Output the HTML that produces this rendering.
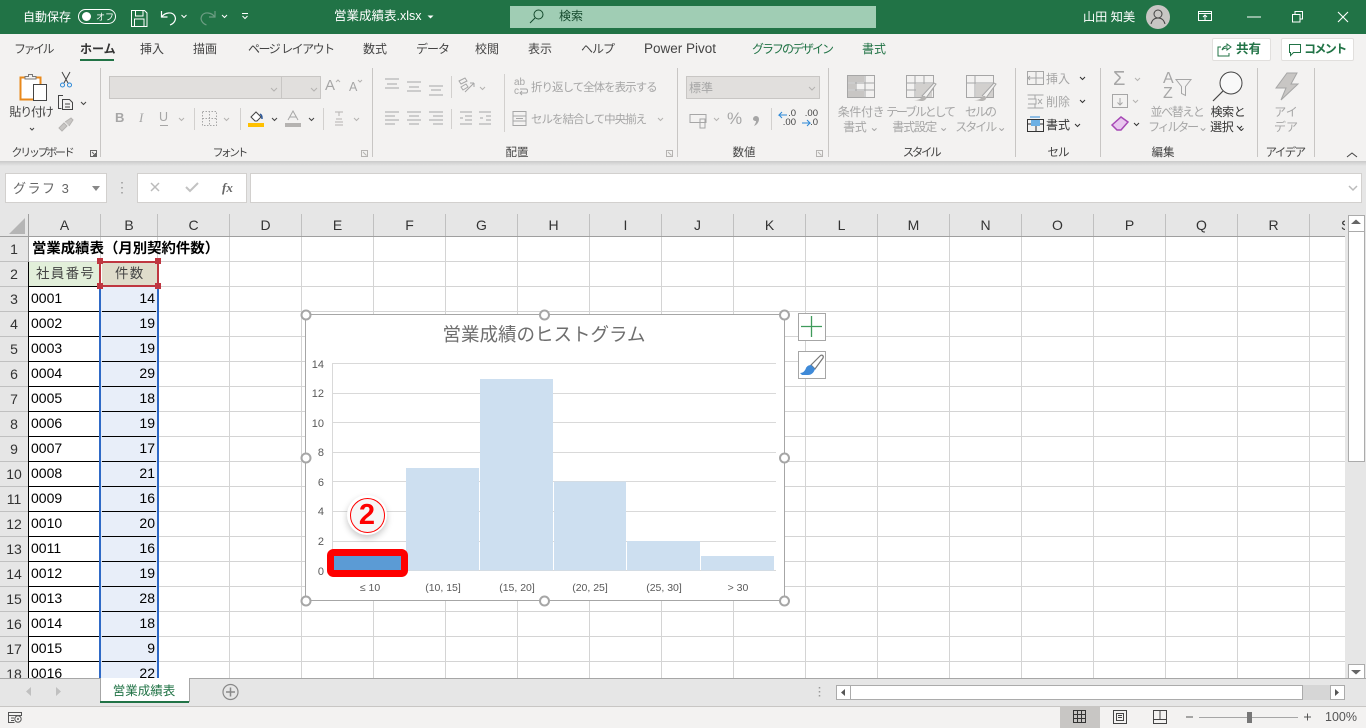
<!DOCTYPE html>
<html lang="ja"><head><meta charset="utf-8"><title>営業成績表</title>
<style>
html,body{margin:0;padding:0}
body{width:1366px;height:728px;overflow:hidden;position:relative;background:#fff;font-family:"Liberation Sans","Noto Sans CJK JP",sans-serif;font-size:12px;color:#444}
.a{position:absolute;white-space:nowrap}
.c{position:absolute;white-space:nowrap;transform:translateX(-50%);text-align:center}
svg{position:absolute;left:0;top:0;overflow:visible}
.g{color:#a6a6a6}
.tab{position:absolute;top:41px;line-height:16px;font-size:12px;color:#444;white-space:nowrap}
.lab{position:absolute;top:145px;line-height:16px;font-size:11.5px;color:#444;white-space:nowrap;transform:translateX(-50%)}
.col{position:absolute;line-height:25px;font-size:14px;color:#000;white-space:nowrap}
.hd{position:absolute;top:214px;height:23px;line-height:23px;text-align:center;font-size:14px;color:#333}
.ax{position:absolute;left:300px;width:24px;text-align:right;font-size:11px;line-height:14px;color:#595959}
.cat{position:absolute;top:581px;font-size:10.5px;line-height:14px;color:#595959;white-space:nowrap;transform:translateX(-50%)}
</style></head><body>

<!-- title bar -->
<div class="a" style="left:0;top:0;width:1366px;height:34px;background:#217346"></div>
<div class="a" style="left:23px;top:9px;line-height:16px;color:#fff;font-size:12px">自動保存</div>
<div class="a" style="left:78px;top:9px;width:36px;height:13px;border:1px solid #fff;border-radius:8px"></div>
<div class="a" style="left:82px;top:12px;width:9px;height:9px;border-radius:50%;background:#fff"></div>
<div class="a" style="left:96px;top:10px;line-height:14px;color:#fff;font-size:9px">オフ</div>
<div class="a" style="left:334px;top:8px;line-height:17px;color:#fff;font-size:12.5px">営業成績表.xlsx</div>
<div class="a" style="left:510px;top:6px;width:366px;height:22px;background:#a0cdb4"></div>
<div class="a" style="left:559px;top:8px;line-height:17px;color:#14492c;font-size:12px">検索</div>
<div class="a" style="left:1083px;top:9px;line-height:17px;color:#fff;font-size:12.2px">山田 知美</div>
<svg width="1366" height="34" fill="none" stroke="#fff" stroke-width="1">
<path d="M131.5 10.5h13l2.500 2.500v13.500h-15.500zM135.500 10.500v5.500h7.500v-5.500M134.500 26.500v-7.500h9.500v7.500"/>
<path d="M161.500 11v6h6M162 16.500c3-4 10-5 12.500-1 2.500 4-.5 8-4.500 9.500" stroke-width="1.200"/>
<path d="M181.500 15l2.500 2.500 2.500-2.500M222 15l2.500 2.500 2.500-2.500" />
<path d="M215 11v6h-6M214.500 16.500c-3-4-10-5-12.500-1-2.500 4 .5 8 4.500 9.500" stroke="#6c9d83" stroke-width="1.200"/>
<path d="M242 13.500h6M242.500 16l2.500 2.500 2.500-2.500"/>
<path d="M427.500 15.500h6l-3 3z" fill="#fff" stroke="none"/>
<circle cx="538.500" cy="14.500" r="4.500" stroke="#14492c"/><path d="M535 18l-5 5" stroke="#14492c"/>
<circle cx="1158" cy="17" r="12" fill="#c8c6c4" stroke="none"/>
<circle cx="1158" cy="14" r="4" stroke="#444"/><path d="M1151 24c1-4 3-6 7-6s6 2 7 6" stroke="#444"/>
<path d="M1198.500 11.500h13v9h-13zM1198.500 13.500h13M1205 20v-5M1203 17l2-2 2 2"/>
<path d="M1247 17h14"/>
<path d="M1292.500 14.500h7.500v7.500h-7.500zM1295 14v-2.500h7.500v7.500h-2.500"/>
<path d="M1338 12l10 10M1348 12l-10 10" stroke-width="1.100"/>
</svg>

<!-- ribbon -->
<div class="a" style="left:0;top:34px;width:1366px;height:127px;background:#f3f2f1"></div>
<div class="a" style="left:0;top:161px;width:1366px;height:53px;background:#e6e6e6"></div>
<div class="a" style="left:0;top:161px;width:1366px;height:5px;background:linear-gradient(#c9c9c9,#e6e6e6)"></div>
<div class="tab" style="left:14px;letter-spacing:-2.5px">ファイル</div>
<div class="tab" style="left:80px;font-weight:bold;color:#333">ホーム</div>
<div class="a" style="left:80px;top:59px;width:34px;height:2px;background:#217346"></div>
<div class="tab" style="left:140px">挿入</div>
<div class="tab" style="left:193px">描画</div>
<div class="tab" style="left:248px;letter-spacing:-1.5px">ページ レイアウト</div>
<div class="tab" style="left:363px">数式</div>
<div class="tab" style="left:416px;letter-spacing:-1px">データ</div>
<div class="tab" style="left:475px">校閲</div>
<div class="tab" style="left:528px">表示</div>
<div class="tab" style="left:581px;letter-spacing:-1px">ヘルプ</div>
<div class="tab" style="left:644px;font-size:13.5px">Power Pivot</div>
<div class="tab" style="left:752px;color:#217346;letter-spacing:-2px">グラフのデザイン</div>
<div class="tab" style="left:862px;color:#217346">書式</div>
<div class="a" style="left:1212px;top:38px;width:57px;height:21px;background:#fff;border:1px solid #e1dfdd;border-radius:2px"></div>
<div class="a" style="left:1236px;top:41px;line-height:16px;font-weight:bold;color:#217346;font-size:12.500px">共有</div>
<div class="a" style="left:1281px;top:38px;width:71px;height:21px;background:#fff;border:1px solid #e1dfdd;border-radius:2px"></div>
<div class="a" style="left:1304px;top:41px;line-height:16px;font-weight:bold;color:#217346;font-size:12px;letter-spacing:-1.6px">コメント</div>

<!-- combos -->
<div class="a" style="left:109px;top:76px;width:171px;height:21px;background:#e1dfdd;border:1px solid #c8c6c4"></div>
<div class="a" style="left:281px;top:76px;width:38px;height:21px;background:#e1dfdd;border:1px solid #c8c6c4"></div>
<div class="a" style="left:686px;top:76px;width:132px;height:21px;background:#e1dfdd;border:1px solid #c8c6c4"></div>
<div class="a g" style="left:689px;top:80px;line-height:16px;font-size:12px">標準</div>

<div class="c" style="left:31px;top:104px;line-height:16px;color:#444;letter-spacing:-1.2px">貼り付け</div>
<div class="lab" style="left:42px;font-size:11px;letter-spacing:-2.3px">クリップボード</div>
<div class="lab" style="left:229px;font-size:11px;letter-spacing:-2.8px">フォント</div>
<div class="lab" style="left:517px">配置</div>
<div class="lab" style="left:744px">数値</div>
<div class="lab" style="left:921px;letter-spacing:-2.4px">スタイル</div>
<div class="lab" style="left:1058px;letter-spacing:-1px">セル</div>
<div class="lab" style="left:1163px">編集</div>
<div class="lab" style="left:1285px;letter-spacing:-1.6px">アイデア</div>

<div class="a g" style="left:531px;top:80px;line-height:16px;font-size:11.5px;letter-spacing:-1px">折り返して全体を表示する</div>
<div class="a g" style="left:531px;top:112px;line-height:16px;font-size:11.5px;letter-spacing:-1px">セルを結合して中央揃え</div>

<div class="c g" style="left:861px;top:105px;line-height:15px;letter-spacing:-.4px">条件付き<br>書式 ⌄</div>
<div class="c g" style="left:920px;top:105px;line-height:15px;letter-spacing:-2.2px">テーブルとして<br><span style="letter-spacing:-1px">書式設定 ⌄</span></div>
<div class="c g" style="left:980px;top:105px;line-height:15px;letter-spacing:-2px">セルの<br>スタイル ⌄</div>
<div class="a g" style="left:1046px;top:71px;line-height:16px">挿入</div>
<div class="a g" style="left:1046px;top:94px;line-height:16px">削除</div>
<div class="a" style="left:1046px;top:117px;line-height:16px;color:#333">書式</div>
<div class="c g" style="left:1177px;top:105px;line-height:15px;letter-spacing:-1.4px">並べ替えと<br><span style="letter-spacing:-2.2px">フィルター ⌄</span></div>
<div class="c" style="left:1228px;top:105px;line-height:15px;color:#333;letter-spacing:-.4px">検索と<br>選択 ⌄</div>
<div class="c g" style="left:1286px;top:105px;line-height:15px">アイ<br>デア</div>
<div class="a" style="left:325px;top:76px;font-size:15px;line-height:20px;color:#a6a6a6">A</div>
<div class="a" style="left:349px;top:78px;font-size:12.500px;line-height:18px;color:#a6a6a6">A</div>
<div class="a" style="left:115px;top:110px;font-size:13px;line-height:16px;font-weight:bold;color:#a6a6a6">B</div>
<div class="a" style="left:139px;top:110px;font-size:13px;line-height:16px;font-style:italic;color:#a6a6a6;font-family:'Liberation Serif',serif">I</div>
<div class="a" style="left:159px;top:109px;font-size:12.500px;line-height:16px;color:#a6a6a6">U</div>
<div class="a" style="left:727px;top:108px;font-size:17px;line-height:22px;color:#a6a6a6">%</div>
<div class="a" style="left:779px;width:17px;text-align:right;top:110px;font-size:9.5px;line-height:8.5px;color:#444">.0<br>.00</div>
<div class="a" style="left:801px;width:17px;text-align:right;top:110px;font-size:9.5px;line-height:8.5px;color:#444">.00<br>.0</div>
<div class="a" style="left:514px;top:78px;font-size:10px;line-height:9px;color:#a6a6a6">ab<br>c</div>
<div class="a" style="left:1163px;top:71px;font-size:16px;line-height:15px;color:#a6a6a6">A<br>Z</div>
<div class="a" style="left:1113px;top:67px;font-size:20px;line-height:24px;color:#a6a6a6">Σ</div>

<svg width="1366" height="170" fill="none" stroke="#a6a6a6">
<!-- dividers -->
<path d="M100.500 68v89M372.500 68v89M677.500 68v89M828.500 68v89M1015.500 68v89M1100.500 68v89M1257.500 68v89M1314.500 68v89" stroke="#c8c6c4"/>
<path d="M194.500 108v22M240.500 108v22M323.500 108v22M451.500 76v22M451.500 109v20M504.500 74v58M771.500 108v22" stroke="#d2d0ce"/>
<!-- paste -->
<rect x="20.500" y="77.500" width="20" height="22" fill="#fff" stroke="#e8891c" stroke-width="2"/>
<path d="M25 79v-2.500h3.500v-2h4v2h3.500V79z" fill="#f3f2f1" stroke="#777"/>
<rect x="33.500" y="84.500" width="13" height="16" fill="#fff" stroke="#444"/>
<path d="M30 128l2 2 2-2" stroke="#444"/>
<!-- scissors -->
<path d="M62 72l6 11M70 72l-6 11" stroke="#444"/>
<circle cx="62.500" cy="85" r="2" stroke="#2b88d8"/><circle cx="69.500" cy="85" r="2" stroke="#2b88d8"/>
<!-- copy -->
<path d="M63 95.500h-4.500v13h3M62.500 99.500h7l3 3v7h-10zM65 104h5M65 107h5" stroke="#444"/>
<path d="M81 102l2.500 2.500L86 102" stroke="#444"/>
<path d="M59 128l5-5 3 3-5 5zM65 122l6-4 2 2-4 6" fill="#c8c6c4" stroke="#b5b3b1"/>
<!-- launchers -->
<path d="M90.500 150.500h6v6h-6zM92 152l3.500 3.500M95.500 153v2.500H93" stroke="#666"/>
<path d="M361.500 150.500h6v6h-6zM363 152l3.500 3.500" stroke="#b5b3b1"/>
<path d="M666.500 150.500h6v6h-6zM668 152l3.500 3.500M816.500 150.500h6v6h-6zM818 152l3.500 3.500" stroke="#b5b3b1"/>
<!-- combo chevrons -->
<path d="M271 88l3 3 3-3M311 88l3 3 3-3M809 87l3 3 3-3" stroke="#b5b3b1"/>
<!-- A up/down -->
<path d="M336 82l2-2 2 2M358 80l2 2 2-2" stroke="#b5b3b1"/>
<!-- underline etc. -->
<path d="M160 125.500h8" stroke="#a6a6a6"/>
<path d="M179 118l2.500 2.500 2.500-2.500M224 118l2.500 2.500 2.500-2.500M354 118l2.500 2.500 2.500-2.500" stroke="#b5b3b1"/>
<path d="M272 118l2.500 2.500 2.500-2.500M309 118l2.500 2.500 2.500-2.500" stroke="#444"/>
<!-- borders -->
<path d="M202.500 111.500h14v14h-14z" stroke="#a6a6a6" stroke-dasharray="1.500 1.500"/>
<path d="M202.500 118.500h14M209.500 111v15" stroke="#a6a6a6" stroke-dasharray="1.500 1.500"/>
<!-- fill color -->
<path d="M251 117l5-5 5 5-4 4h-2z" fill="#fff" stroke="#444"/><path d="M260 114c2 1 2 3 2 5" stroke="#2b579a" stroke-width="1.500"/>
<rect x="248" y="123" width="16" height="4" fill="#ffc000" stroke="none"/>
<rect x="285" y="123" width="16" height="4" fill="#b5b3b1" stroke="none"/>
<path d="M288 120l5-9 5 9M290 117h6" stroke="#a6a6a6"/>
<!-- phonetic -->
<path d="M335 112h8M339 112v4M336 119h6M335 122h8M335 125h8" stroke="#b5b3b1"/>
<!-- align -->
<path d="M385 79h14M387 84h10M385 88h14M407 82h14M409 87h10M407 91h14M429 86h14M431 90h10M429 95h14" stroke="#a6a6a6"/>
<path d="M385 112h14M385 116h10M385 120h14M385 124h10M407 112h14M409 116h10M407 120h14M409 124h10M429 112h14M433 116h10M429 120h14M433 124h10" stroke="#a6a6a6"/>
<path d="M460 112h12M465 116h7M465 120h7M460 124h12M460 118h3M479 112h12M486 116h5M486 120h5M479 124h12M480 118h3" stroke="#a6a6a6"/>
<!-- orientation -->
<path d="M465 92l9-9M474 83h-4M474 83v4" stroke="#a6a6a6"/>
<path d="M459 81l6-3 2 3-6 3zM461 87l5-3 2 3-5 3z" stroke="#a6a6a6"/>
<path d="M480 87l2.500 2.500 2.500-2.500" stroke="#b5b3b1"/>
<path d="M658 118l2.500 2.500 2.500-2.500" stroke="#b5b3b1"/>
<!-- wrap / merge icons -->
<path d="M520 89h6c2 0 2 4 0 4h-5M522 91l-2 2 2 2" stroke="#a6a6a6"/>
<path d="M513 111.500h13v14h-13zM513 116h13M513 121h13M516 118.500h7" stroke="#a6a6a6"/>
<!-- number -->
<path d="M690 114.500h16v8h-16zM700 119h5v9h-5z" stroke="#a6a6a6"/>
<path d="M714 118l2.500 2.500 2.500-2.500" stroke="#b5b3b1"/>
<path d="M753 119a3 3 0 1 1 6 0c0 3-2 6-5 7 1-2 2-3 2-5-2 0-3-1-3-2z" fill="#a6a6a6" stroke="none"/>
<path d="M787 115h-8l3-3M779 115l3 3" stroke="#2b88d8"/>
<path d="M802 123h8l-3-3M810 123l-3 3" stroke="#2b88d8"/>
<!-- style icons -->
<path d="M847.500 75.500h27v22h-27zM847.500 83h27M847.500 90h27M856 75.500v22M865 75.500v22" stroke="#a6a6a6"/>
<rect x="848" y="76" width="16" height="6" fill="#c8c6c4" stroke="none"/><rect x="848" y="84" width="8" height="5" fill="#c8c6c4" stroke="none"/><rect x="848" y="91" width="16" height="6" fill="#c8c6c4" stroke="none"/>
<path d="M906.500 75.500h27v22h-27zM906.500 83h27M906.500 90h27M915 75.500v22M924 75.500v22" stroke="#a6a6a6"/>
<rect x="916" y="84" width="16" height="13" fill="#d2d0ce" stroke="none"/>
<path d="M966.500 75.500h27v22h-27zM966.500 83h27M975 75.500v22" stroke="#a6a6a6"/>
<rect x="976" y="84" width="17" height="13" fill="#d2d0ce" stroke="none"/>
<path d="M922 96l12-13 2 1-10 14zM982 96l12-13 2 1-10 14" fill="#f3f2f1" stroke="#a6a6a6"/>
<path d="M914 100c3 0 6 0 8-3 2-2 4-1 4 1 0 2-2 3-5 3zM974 100c3 0 6 0 8-3 2-2 4-1 4 1 0 2-2 3-5 3z" fill="#b5b3b1" stroke="none"/>
<!-- cells -->
<path d="M1027.500 71.500h16v13h-16zM1036 71.500v13M1027.500 78h16M1031 78h-3l2-2M1028 78l2 2" stroke="#a6a6a6"/>
<path d="M1027.500 95h16M1027.500 108h16M1035 95v4M1035 104v4M1028 99h8v5h-8M1038 99l4 5M1042 99l-4 5" stroke="#a6a6a6"/>
<path d="M1027.500 119.500h16v12h-16zM1027.500 124h16M1036 119.500v12" stroke="#333"/>
<rect x="1031" y="120" width="9" height="6" fill="#6cb0e4" stroke="none"/>
<path d="M1030 117h10" stroke="#2b88d8"/>
<path d="M1080 77l2.500 2.500L1085 77M1080 100l2.500 2.500 2.500-2.500M1075 124l2.500 2.500 2.500-2.500" stroke="#333"/>
<!-- editing -->
<path d="M1135 78l2.500 2.500 2.500-2.500M1133 100l2.500 2.500 2.500-2.500" stroke="#b5b3b1"/>
<path d="M1112.500 94.500h15v13h-15zM1120 98v7M1117.500 102.500l2.500 2.500 2.500-2.500" stroke="#a6a6a6"/>
<path d="M1112 125l9-8 7 5-7 8h-4z" fill="#e9c7ef" stroke="#a648b5" stroke-width="1.500"/>
<path d="M1134 123l2.500 2.500 2.500-2.500M1237 126l2.500 2.500 2.500-2.500" stroke="#333"/>
<path d="M1176 79.500h15l-5.500 7v9l-4-2v-7z" stroke="#a6a6a6"/>
<circle cx="1231" cy="83" r="11" fill="#f9f9f9" stroke="#444"/><path d="M1223 91l-10 10" stroke="#444" stroke-width="1.200"/>
<path d="M1287 73h10l-6 11h7l-17 16 5-12h-10z" fill="#c8c6c4" stroke="#a6a6a6"/>
<path d="M1347 157l5-4 5 4" stroke="#444"/>
<!-- share -->
<path d="M1221 47h-3v9h11v-3M1222 50c1-3 3-4 5-4v-2l4 3-4 3v-2c-2 0-4 1-5 2z" stroke="#217346"/>
<path d="M1289.500 44.500h11v8h-7l-3 3v-3h-1z" stroke="#217346"/>
</svg>

<!-- formula bar -->
<div class="a" style="left:5px;top:173px;width:100px;height:28px;background:#fff;border:1px solid #d2d0ce"></div>
<div class="a" style="left:13px;top:180px;line-height:18px;font-size:13px;color:#666;letter-spacing:1.500px">グラフ 3</div>
<div class="a" style="left:137px;top:173px;width:108px;height:28px;background:#fff;border:1px solid #d2d0ce"></div>
<div class="a" style="left:250px;top:173px;width:1110px;height:28px;background:#fff;border:1px solid #d2d0ce"></div>
<div class="a" style="left:222px;top:180px;line-height:16px;font-size:13px;font-weight:bold;font-style:italic;color:#666;font-family:'Liberation Serif',serif">fx</div>
<svg width="1366" height="214" fill="none">
<path d="M92 186h8l-4 5z" fill="#888"/>
<path d="M122 182v1.500M122 187v1.500M122 192v1.500" stroke="#999" stroke-width="1.500"/>
<path d="M151 183l8 8M159 183l-8 8" stroke="#bbb" stroke-width="1.500"/>
<path d="M186 187l4 4 8-8" stroke="#c2c2c2" stroke-width="2"/>
<path d="M1349 186l4 4 4-4" stroke="#bbb" stroke-width="1.500"/>
</svg>

<!-- sheet -->
<div class="a" style="left:0;top:214px;width:1345px;height:23px;background:#e6e6e6"></div>
<div class="a" style="left:0;top:237px;width:28px;height:441px;background:#e6e6e6"></div>
<div class="a" style="left:101px;top:287px;width:56px;height:391px;background:#e8eef9"></div>
<div class="a" style="left:29px;top:262px;width:71px;height:24px;background:#e2efda"></div>
<div class="a" style="left:102px;top:262px;width:55px;height:24px;background:#dfdccb"></div>

<svg width="1366" height="728" fill="none">
<path stroke="#d4d4d4" d="M29 261.500H1345M29 286.500H1345M29 311.500H1345M29 336.500H1345M29 361.500H1345M29 386.500H1345M29 411.500H1345M29 436.500H1345M29 461.500H1345M29 486.500H1345M29 511.500H1345M29 536.500H1345M29 561.500H1345M29 586.500H1345M29 611.500H1345M29 636.500H1345M29 661.500H1345"/>
<path stroke="#d4d4d4" d="M229.500 237V678M301.500 237V678M373.500 237V678M445.500 237V678M517.500 237V678M589.500 237V678M661.500 237V678M733.500 237V678M805.500 237V678M877.500 237V678M949.500 237V678M1021.500 237V678M1093.500 237V678M1165.500 237V678M1237.500 237V678M1309.500 237V678M157.500 237V262M100.500 237V262"/>
<path stroke="#c0c0c0" d="M100.500 214V236M157.500 214V236M229.500 214V236M301.500 214V236M373.500 214V236M445.500 214V236M517.500 214V236M589.500 214V236M661.500 214V236M733.500 214V236M805.500 214V236M877.500 214V236M949.500 214V236M1021.500 214V236M1093.500 214V236M1165.500 214V236M1237.500 214V236M1309.500 214V236"/>
<path stroke="#c0c0c0" d="M0 261.500H28M0 286.500H28M0 311.500H28M0 336.500H28M0 361.500H28M0 386.500H28M0 411.500H28M0 436.500H28M0 461.500H28M0 486.500H28M0 511.500H28M0 536.500H28M0 561.500H28M0 586.500H28M0 611.500H28M0 636.500H28M0 661.500H28"/>
<path stroke="#000" d="M29 286.500H100M29 311.500H100M29 336.500H100M29 361.500H100M29 386.500H100M29 411.500H100M29 436.500H100M29 461.500H100M29 486.500H100M29 511.500H100M29 536.500H100M29 561.500H100M29 586.500H100M29 611.500H100M29 636.500H100M29 661.500H100M102 311.500H156M102 336.500H156M102 361.500H156M102 386.500H156M102 411.500H156M102 436.500H156M102 461.500H156M102 486.500H156M102 511.500H156M102 536.500H156M102 561.500H156M102 586.500H156M102 611.500H156M102 636.500H156M102 661.500H156M28.500 262V678"/>
<path stroke="#9f9f9f" d="M0 236.500H1345M28.500 214V262"/>
<path fill="#b5b5b5" d="M25 218v16H9z"/>
<path stroke="#2e69c6" stroke-width="2" d="M100 287V678M158 287V678"/>
<rect x="100" y="262" width="58" height="24" stroke="#bf3640" stroke-width="2"/>
<path fill="#bf3640" d="M97 258h6v6h-6zM155 258h6v6h-6zM97 283h6v6h-6zM155 283h6v6h-6z"/>
</svg>

<div class="hd" style="left:29px;width:71px">A</div><div class="hd" style="left:101px;width:56px">B</div><div class="hd" style="left:158px;width:71px">C</div><div class="hd" style="left:230px;width:71px">D</div><div class="hd" style="left:302px;width:71px">E</div><div class="hd" style="left:374px;width:71px">F</div><div class="hd" style="left:446px;width:71px">G</div><div class="hd" style="left:518px;width:71px">H</div><div class="hd" style="left:590px;width:71px">I</div><div class="hd" style="left:662px;width:71px">J</div><div class="hd" style="left:734px;width:71px">K</div><div class="hd" style="left:806px;width:71px">L</div><div class="hd" style="left:878px;width:71px">M</div><div class="hd" style="left:950px;width:71px">N</div><div class="hd" style="left:1022px;width:71px">O</div><div class="hd" style="left:1094px;width:71px">P</div><div class="hd" style="left:1166px;width:71px">Q</div><div class="hd" style="left:1238px;width:71px">R</div><div class="hd" style="left:1310px;width:35px;overflow:hidden;text-align:left;text-indent:31px">S</div>

<div class="a" style="left:0;top:237px;width:1345px;height:441px;overflow:hidden">
<div class="col" style="left:0;top:0;width:28px;text-align:center;color:#333">1<br>2<br>3<br>4<br>5<br>6<br>7<br>8<br>9<br>10<br>11<br>12<br>13<br>14<br>15<br>16<br>17<br>18</div>
<div class="col" style="left:32px;top:0;font-weight:bold;font-size:14.400px">営業成績表（月別契約件数）</div>
<div class="col" style="left:36px;top:24px;font-size:13.500px;letter-spacing:1.300px;color:#444">社員番号</div>
<div class="col" style="left:115px;top:24px;font-size:13.500px;letter-spacing:1.300px;color:#444">件数</div>
<div class="col" style="left:31px;top:49px">0001<br>0002<br>0003<br>0004<br>0005<br>0006<br>0007<br>0008<br>0009<br>0010<br>0011<br>0012<br>0013<br>0014<br>0015<br>0016</div>
<div class="col" style="left:101px;width:54px;text-align:right;top:49px">14<br>19<br>19<br>29<br>18<br>19<br>17<br>21<br>16<br>20<br>16<br>19<br>28<br>18<br>9<br>22</div>
</div>

<!-- chart -->
<div class="a" style="left:305px;top:314px;width:478px;height:285px;background:#fff;border:1.500px solid #a6a6a6"></div>
<div class="c" style="left:544px;top:321px;line-height:28px;font-size:18.500px;color:#6e6e6e">営業成績のヒストグラム</div>
<svg width="1366" height="728" fill="none">
<path stroke="#d9d9d9" d="M332 363.500H776M332 393.500H776M332 422.500H776M332 452.500H776M332 481.500H776M332 511.500H776M332 541.500H776M332 570.500H776M332.500 363V571"/>
<g fill="#cddff0"><rect x="406" y="468" width="73" height="102.500"/><rect x="480" y="379" width="73" height="191.500"/><rect x="554" y="481.500" width="72" height="89"/><rect x="627" y="541" width="73" height="29.500"/><rect x="701" y="556" width="73" height="14.500"/></g>
<rect x="330.500" y="552.500" width="74" height="21" rx="3" fill="#5b9bd5" stroke="#fe0000" stroke-width="7"/>
<g fill="#fff" stroke="#a6a6a6" stroke-width="2"><circle cx="306" cy="315" r="4.500"/><circle cx="544.500" cy="315" r="4.500"/><circle cx="784.500" cy="315" r="4.500"/><circle cx="306" cy="458" r="4.500"/><circle cx="784.500" cy="458" r="4.500"/><circle cx="306" cy="601" r="4.500"/><circle cx="544.500" cy="601" r="4.500"/><circle cx="784.500" cy="601" r="4.500"/></g>
</svg>
<div class="a" style="left:347px;top:495px;width:40px;height:40px;border-radius:50%;background:#fff;box-shadow:0 3px 7px rgba(0,0,0,.22)"></div>
<div class="a" style="left:350px;top:498px;width:33px;height:33px;border-radius:50%;background:#f6f6f6;border:1px solid #fe0000"></div>
<div class="c" style="left:367px;top:499px;line-height:32px;font-size:29px;font-weight:bold;color:#fe0000">2</div>
<div class="ax" style="top:358px">14</div>
<div class="ax" style="top:387px">12</div>
<div class="ax" style="top:417px">10</div>
<div class="ax" style="top:446px">8</div>
<div class="ax" style="top:476px">6</div>
<div class="ax" style="top:505px">4</div>
<div class="ax" style="top:535px">2</div>
<div class="ax" style="top:565px">0</div>
<div class="cat" style="left:370px">≤ 10</div>
<div class="cat" style="left:443px">(10, 15]</div>
<div class="cat" style="left:517px">(15, 20]</div>
<div class="cat" style="left:590px">(20, 25]</div>
<div class="cat" style="left:664px">(25, 30]</div>
<div class="cat" style="left:738px">&gt; 30</div>

<!-- chart side buttons -->
<div class="a" style="left:798px;top:313px;width:26px;height:26px;background:#fff;border:1px solid #a6a6a6"></div>
<div class="a" style="left:798px;top:351px;width:26px;height:26px;background:#fff;border:1px solid #a6a6a6"></div>
<svg width="1366" height="728" fill="none">
<path d="M801 326.500h21M811.500 316v21" stroke="#3f9a5b" stroke-width="1.300"/>
<path d="M811 365l9-9c2-2 4 0 3 2l-8 11z" fill="#fff" stroke="#777" stroke-width="1.200"/>
<path d="M800 373c3 0 5-2 6-5 1-2 3-3 5-3l4 4c-1 3-3 6-7 6h-6z" fill="#3f8ad8"/>
</svg>

<!-- scrollbars -->
<div class="a" style="left:1345px;top:214px;width:21px;height:464px;background:#e6e6e6"></div>
<div class="a" style="left:1348px;top:215px;width:15px;height:15px;background:#fff;border:1px solid #ababab"></div>
<div class="a" style="left:1348px;top:231px;width:15px;height:229px;background:#fff;border:1px solid #ababab"></div>
<div class="a" style="left:1348px;top:664px;width:15px;height:14px;background:#fff;border:1px solid #ababab"></div>
<div class="a" style="left:0;top:678px;width:1366px;height:28px;background:#e6e6e6;border-top:1px solid #a6a6a6;box-sizing:border-box"></div>
<div class="a" style="left:100px;top:678px;width:88px;height:24px;background:#fff;border:1px solid #a6a6a6;border-top:0;border-bottom:0"></div>
<div class="a" style="left:100px;top:701px;width:89px;height:2px;background:#217346"></div>
<div class="c" style="left:144px;top:683px;line-height:17px;font-size:12.500px;color:#217346">営業成績表</div>
<div class="a" style="left:836px;top:685px;width:13px;height:13px;background:#fff;border:1px solid #ababab"></div>
<div class="a" style="left:850px;top:685px;width:451px;height:13px;background:#fff;border:1px solid #ababab"></div>
<div class="a" style="left:1303px;top:685px;width:27px;height:15px;background:#d6d6d6"></div>
<div class="a" style="left:1330px;top:685px;width:13px;height:13px;background:#fff;border:1px solid #ababab"></div>

<!-- status bar -->
<div class="a" style="left:0;top:706px;width:1366px;height:22px;background:#f3f2f1;border-top:1px solid #c8c6c4;box-sizing:border-box"></div>
<div class="a" style="left:1060px;top:707px;width:40px;height:21px;background:#c8c6c4"></div>
<div class="a" style="left:1325px;top:709px;line-height:16px;font-size:12.500px;color:#555">100%</div>
<svg width="1366" height="728" fill="none">
<path d="M1351 224l5-4.500 5 4.500zM1351 670l5 4.500 5-4.500z" fill="#666"/>
<path d="M31 687v9l-5-4.500zM56 687v9l5-4.500z" fill="#c0c0c0"/>
<circle cx="230.500" cy="692" r="7.500" stroke="#888" stroke-width="1.200"/><path d="M226 692h9M230.500 687.500v9" stroke="#888" stroke-width="1.500"/>
<path d="M819.500 687v1.500M819.500 691v1.500M819.500 695v1.500" stroke="#999" stroke-width="1.500"/>
<path d="M845 689v7l-4-3.500zM1335 689v7l4-3.500z" fill="#555"/>
<path d="M8.500 712.500h13v3h-13zM8.500 715.500v7h6M11 718h3M11 720.500h3" stroke="#555"/><circle cx="18" cy="719" r="3.200" stroke="#555"/><circle cx="18" cy="719" r="1" fill="#555"/>
<path d="M1073.500 710.500h12v12h-12zM1077.500 710.500v12M1081.500 710.500v12M1073.500 714.500h12M1073.500 718.500h12" stroke="#333"/>
<path d="M1113.500 710.500h13v13h-13zM1116.500 713.500h7v7h-7zM1118 715.500h4M1118 717.500h4" stroke="#444"/>
<path d="M1153.500 710.500h13v13h-13zM1153.500 719.500h13M1160 710.500v9" stroke="#444"/>
<path d="M1186 717h7M1304 717h7M1307.500 713.500v7" stroke="#555"/>
<path d="M1199 717.500h99" stroke="#a6a6a6"/>
<rect x="1247" y="712" width="5" height="11" fill="#777"/>
</svg>
</body></html>
